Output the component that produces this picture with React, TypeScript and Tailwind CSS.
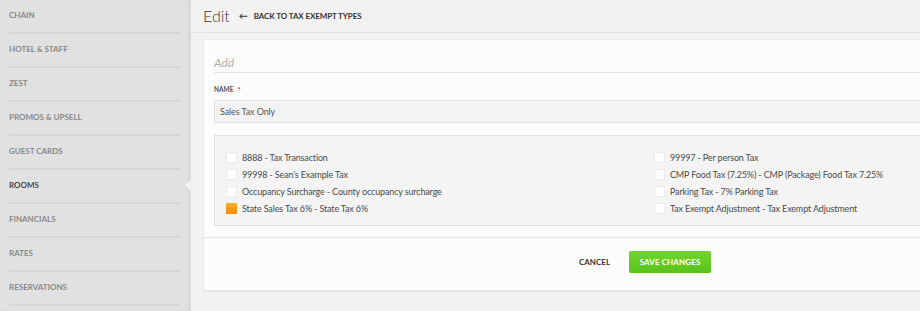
const navItems = [
  "Chain",
  "Hotel & Staff",
  "Zest",
  "Promos & Upsell",
  "Guest Cards",
  "Rooms",
  "Financials",
  "Rates",
  "Reservations",
];

const leftTaxes = [
  { label: "8888 - Tax Transaction", checked: false },
  { label: "99998 - Sean's Example Tax", checked: false },
  { label: "Occupancy Surcharge - County occupancy surcharge", checked: false },
  { label: "State Sales Tax 6% - State Tax 6%", checked: true },
];

const rightTaxes = [
  { label: "99997 - Per person Tax", checked: false },
  { label: "CMP Food Tax (7.25%) - CMP (Package) Food Tax 7.25%", checked: false },
  { label: "Parking Tax - 7% Parking Tax", checked: false },
  { label: "Tax Exempt Adjustment - Tax Exempt Adjustment", checked: false },
];

function TaxRow({ label, checked }: { label: string; checked: boolean }) {
  return (
    <div className="flex h-[17px] items-center">
      <div
        className={
          checked
            ? "h-[11px] w-[11px] rounded-[1px] bg-gradient-to-b from-[#fbab2a] to-[#f28a00]"
            : "h-[11px] w-[11px] border border-[#ececec] bg-white"
        }
      />
      <span className="ml-[5px] text-[9px] tracking-[-0.15px] text-[#4a4a4a]">{label}</span>
    </div>
  );
}

export default function App() {
  return (
    <div
      className="flex h-[311px] w-[920px] overflow-hidden bg-[#f2f2f2]"
      style={{ fontFamily: "Lato, 'Open Sans', sans-serif" }}
    >
      <div className="relative w-[191px] shrink-0 bg-[#e1e1e1] pl-[9px] pr-[11px] shadow-[inset_-3px_0_3px_rgba(0,0,0,0.04)]">
        {navItems.map((item) => (
          <div
            key={item}
            className="flex h-[34px] items-center border-b-2 border-[#d6d6d6] pb-[2px]"
          >
            <span
              className={
                "text-[8px] font-bold uppercase " +
                (item === "Rooms" ? "text-[#444]" : "text-[#888]")
              }
            >
              {item}
            </span>
          </div>
        ))}
        <div className="absolute right-0 top-[179px] h-0 w-0 border-y-[6px] border-r-[6px] border-y-transparent border-r-[#f2f2f2]" />
      </div>

      <div className="flex min-w-0 flex-1 flex-col pl-[12px]">
        <div className="-ml-[12px] flex h-[33px] shrink-0 items-center border-b border-[#e2e2e2] pl-[12px]">
          <span className="text-[16px] font-light text-[#333]">Edit</span>
          <span className="ml-[9px] text-[9px] font-bold text-[#333]">←</span>
          <span className="ml-[6px] text-[8px] font-bold uppercase tracking-[-0.1px] text-[#333]">
            Back to Tax Exempt Types
          </span>
        </div>

        <div className="mt-[6px] h-[252px] w-[900px] shrink-0 border border-[#ececec] bg-[#fcfcfc] shadow-[0_1px_1px_rgba(0,0,0,0.05)]">
          <div className="pl-[10px]">
            <div className="flex h-[33px] items-end border-b border-[#e4e4e4]">
              <span className="text-[12px] italic leading-[18px] text-[#b0b0b0]">Add</span>
            </div>
            <div className="mt-[12px] flex h-[10px] items-center text-[6.5px] font-bold uppercase text-[#555]">
              Name <span className="ml-[4px] text-[8px] text-[#e33]">*</span>
            </div>
            <div className="mt-[5px] flex h-[23px] items-center border border-[#e0e0e0] bg-[#f3f3f3] pl-[5px]">
              <span className="text-[9px] tracking-[-0.1px] text-[#555]">Sales Tax Only</span>
            </div>
            <div className="mt-[12px] h-[91px] border border-[#e0e0e0] bg-[#f4f4f4] pl-[11px] pt-[13px]">
              <div className="flex">
                <div className="w-[428px]">
                  {leftTaxes.map((t) => (
                    <TaxRow key={t.label} label={t.label} checked={t.checked} />
                  ))}
                </div>
                <div>
                  {rightTaxes.map((t) => (
                    <TaxRow key={t.label} label={t.label} checked={t.checked} />
                  ))}
                </div>
              </div>
            </div>
          </div>
          <div className="mt-[11px] border-t border-[#e4e4e4]">
            <div className="flex items-center pl-[375px] pt-[13px]">
              <span className="text-[8px] font-bold uppercase text-[#333]">Cancel</span>
              <button className="ml-[19px] h-[22px] w-[82px] rounded-[2px] bg-gradient-to-b from-[#72d42e] to-[#56c31a] text-[8px] font-bold uppercase tracking-[0.1px] text-white">
                Save Changes
              </button>
            </div>
          </div>
        </div>
      </div>
    </div>
  );
}
